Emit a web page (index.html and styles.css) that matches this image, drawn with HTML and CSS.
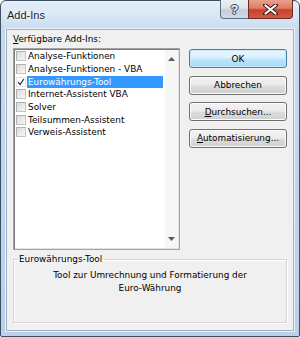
FILE: index.html
```html
<!DOCTYPE html>
<html lang="de">
<head>
<meta charset="utf-8">
<title>Add-Ins</title>
<link rel="stylesheet" href="styles.css">
</head>
<body>
<div class="window">
  <div class="titlebar">
    <span class="title">Add-Ins</span>
    <div class="caption-buttons">
      <div class="cbtn help"><span>?</span></div>
      <div class="cbtn close">
        <svg width="15" height="11" viewBox="0 0 15 11"><path d="M2 1 L13 10 M13 1 L2 10" stroke="#3a1a14" stroke-width="4" stroke-linecap="round"/><path d="M2.5 1.5 L12.5 9.5 M12.5 1.5 L2.5 9.5" stroke="#fff" stroke-width="2.2" stroke-linecap="round"/></svg>
      </div>
    </div>
  </div>
  <div class="client">
    <div class="top">
      <div class="left">
        <div class="label"><u>V</u>erfügbare Add-Ins:</div>
        <div class="listbox">
          <ul class="rows">
            <li class="row"><span class="cb"></span><span class="txt">Analyse-Funktionen</span></li>
            <li class="row"><span class="cb"></span><span class="txt">Analyse-Funktionen - VBA</span></li>
            <li class="row selected"><span class="cb checked"><svg width="10" height="10" viewBox="0 0 10 10"><path d="M1.5 5.2 L3.8 8.2 L8.6 1.2" fill="none" stroke="#1a1a1a" stroke-width="1.3"/></svg></span><span class="txt">Eurowährungs-Tool</span></li>
            <li class="row"><span class="cb"></span><span class="txt">Internet-Assistent VBA</span></li>
            <li class="row"><span class="cb"></span><span class="txt">Solver</span></li>
            <li class="row"><span class="cb"></span><span class="txt">Teilsummen-Assistent</span></li>
            <li class="row"><span class="cb"></span><span class="txt">Verweis-Assistent</span></li>
          </ul>
          <div class="scrollbar">
            <svg width="7" height="4" viewBox="0 0 7 4"><path d="M0 4 L3.5 0 L7 4 Z" fill="#5a5a5a"/></svg>
            <svg width="7" height="4" viewBox="0 0 7 4"><path d="M0 0 L3.5 4 L7 0 Z" fill="#5a5a5a"/></svg>
          </div>
        </div>
      </div>
      <div class="buttons">
        <div class="btn default">OK</div>
        <div class="btn">Abbrechen</div>
        <div class="btn"><u>D</u>urchsuchen...</div>
        <div class="btn"><u>A</u>utomatisierung...</div>
      </div>
    </div>
    <fieldset class="group">
      <legend>Eurowährungs-Tool</legend>
      <p class="desc">Tool zur Umrechnung und Formatierung der<br>Euro-Währung</p>
    </fieldset>
  </div>
</div>
</body>
</html>
```

FILE: styles.css
```css
html, body {
  margin: 0;
  padding: 0;
  background: #ffffff;
}

.window {
  width: 300px;
  height: 337px;
  box-sizing: border-box;
  border: 1px solid #3d4f62;
  border-radius: 6px 6px 2px 2px;
  background: linear-gradient(to bottom, #e6eff8 0px, #d9e7f5 14px, #c6daef 30px, #b9d1eb 100%);
  padding: 0 5px 5px 5px;
  display: flex;
  flex-direction: column;
  font-family: "DejaVu Sans", Verdana, sans-serif;
  font-size: 8.9px;
  color: #000;
}

.titlebar {
  height: 28px;
  display: flex;
  align-items: flex-start;
  justify-content: space-between;
  flex: none;
}

.title {
  font-family: "Liberation Sans", Arial, sans-serif;
  font-size: 11px;
  color: #1c1c1c;
  padding: 8px 0 0 1px;
  text-shadow: 0 0 6px #ffffff, 0 0 3px #ffffff;
}

.caption-buttons {
  display: flex;
  margin-right: 1px;
  margin-top: -1px;
}

.cbtn {
  height: 19px;
  box-sizing: border-box;
  display: flex;
  align-items: center;
  justify-content: center;
  border: 1px solid #5d6d80;
  border-top: none;
}

.help {
  width: 28px;
  border-radius: 0 0 0 4px;
  border-right: none;
  background: linear-gradient(to bottom, #e9eef4 0%, #dde5ee 45%, #c3cfdc 55%, #cfdbe8 100%);
}

.help span {
  font-family: "Liberation Sans", Arial, sans-serif;
  font-weight: bold;
  font-size: 13px;
  color: #eef1f4;
  text-shadow: 0 0 1px #38424e, 1px 0 0 #38424e, -1px 0 0 #38424e, 0 1px 0 #38424e, 0 -1px 0 #38424e;
}

.close {
  width: 45px;
  border-radius: 0 0 4px 0;
  border-color: #6b2a22;
  background: linear-gradient(to bottom, #eaa18f 0%, #de7b66 45%, #c8412d 55%, #d45a3e 100%);
}

.client {
  flex: 1;
  background: #f0f0f0;
  border: 1px solid #9fb2c6;
  box-shadow: 0 0 0 1px #e9f2fb;
  padding: 3px 6px 7px 6px;
  display: flex;
  flex-direction: column;
}

.top {
  display: flex;
  gap: 9px;
}

.left {
  width: 167px;
  display: flex;
  flex-direction: column;
}

.label {
  height: 12px;
  line-height: 13px;
  margin-bottom: 3px;
}

.label u, .btn u {
  text-decoration-thickness: 1px;
  text-underline-offset: 1px;
}

.listbox {
  height: 202px;
  box-sizing: border-box;
  border: 1px solid #a3a3a3;
  box-shadow: inset 1px 1px 0 #7a7a7a, inset -1px -1px 0 #e3e3e3;
  background: #ffffff;
  padding: 1px;
  display: flex;
}

.rows {
  list-style: none;
  margin: 0;
  padding: 0;
  flex: 1;
}

.row {
  height: 12.67px;
  display: flex;
  align-items: center;
  line-height: 12px;
}

.cb {
  width: 10px;
  height: 10px;
  box-sizing: border-box;
  border: 1px solid #c4c4c4;
  border-top-color: #b0b0b0;
  border-left-color: #b0b0b0;
  background: linear-gradient(135deg, #d9d9d9 0%, #ececec 60%, #f7f7f7 100%);
  margin-left: 1px;
  flex: none;
  display: flex;
  align-items: center;
  justify-content: center;
}

.cb.checked {
  background: #ffffff;
  border-color: #e4e4e4;
}

.txt {
  margin-left: 1px;
  padding-left: 1px;
  margin-right: 2px;
  flex: 1;
  height: 12px;
  white-space: nowrap;
}

.selected .txt {
  background: #3399ff;
  color: #ffffff;
}

.scrollbar {
  width: 13px;
  background: #f6f6f6;
  display: flex;
  flex-direction: column;
  align-items: center;
  justify-content: space-between;
  padding: 7px 0 7px 0;
}

.buttons {
  width: 98px;
  padding-top: 16px;
  display: flex;
  flex-direction: column;
  gap: 7.67px;
}

.btn {
  height: 19px;
  box-sizing: border-box;
  border: 1px solid #707070;
  border-radius: 3px;
  background: linear-gradient(to bottom, #f2f2f2 0%, #ebebeb 48%, #dddddd 52%, #cfcfcf 100%);
  box-shadow: inset 0 0 0 1px #fbfbfb;
  display: flex;
  align-items: center;
  justify-content: center;
  color: #000;
}

.btn.default {
  border-color: #3c7fb1;
  box-shadow: inset 0 0 0 1px #c7eafa;
  background: linear-gradient(to bottom, #eaf6fd 0%, #d9f0fc 48%, #bee6fd 52%, #a7d9f5 100%);
}

.group {
  margin: 3px 0 0 0;
  height: 70px;
  box-sizing: border-box;
  border: 1px solid #d5d5d5;
  box-shadow: inset 1px 1px 0 #ffffff, 1px 1px 0 #ffffff;
  border-radius: 0;
  padding: 4px 3px 0 3px;
  min-width: 0;
}

.group legend {
  padding: 0 2px 0 1px;
  margin-left: 1px;
  line-height: 12px;
}

.desc {
  margin: 0;
  text-align: center;
  line-height: 13.3px;
}
```
